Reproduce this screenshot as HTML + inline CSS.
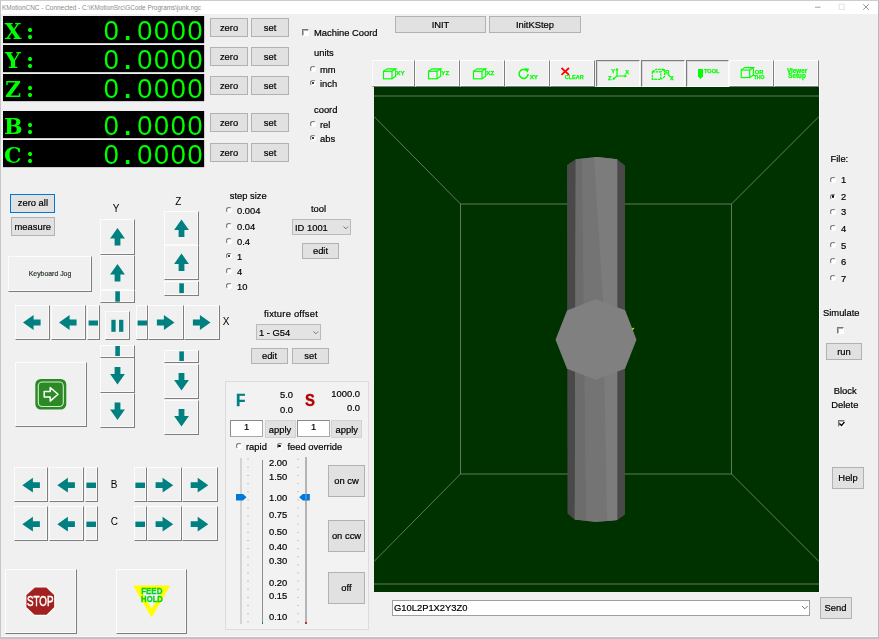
<!DOCTYPE html><html><head><meta charset="utf-8"><title>KMotionCNC</title><style>
*{box-sizing:border-box}
html,body{margin:0;padding:0}
body{width:879px;height:639px;overflow:hidden;background:#f0f0f0;position:relative;font-family:"Liberation Sans",sans-serif;font-size:9.4px;color:#000;-webkit-text-stroke:0.2px}
#w{position:absolute;left:0;top:0;width:879px;height:639px;filter:blur(0.4px)}
.a{position:absolute}
.t{position:absolute;white-space:nowrap;line-height:12px;height:12px;margin-top:1px}
.b{position:absolute;background:rgba(225,225,225,.99);border:1px solid #b2b2b2;text-align:center;white-space:nowrap}
.j{position:absolute;background:rgba(240,240,240,.99);border-top:1px solid #fcfcfc;border-left:1px solid #fcfcfc;border-right:1px solid #7e7e7e;border-bottom:1px solid #7e7e7e;box-shadow:inset -1px -1px 0 #fafafa}
.r{position:absolute;width:6px;height:6px;margin:1px 0 0 1px;border-radius:50%;background:#fff;border:1px solid #fff;border-top-color:#777;border-left-color:#777}
.r.on:after{content:"";position:absolute;left:.8px;top:.8px;width:2.4px;height:2.4px;background:#000;border-radius:50%}
.c{position:absolute;width:7px;height:7px;background:#fff;border-top:1px solid #777;border-left:1px solid #777;border-right:1px solid #fff;border-bottom:1px solid #fff;box-shadow:inset 1px 1px 0 #b0b0b0}
.cb{position:absolute;background:#e3e3e3;border:1px solid #bababa}
</style></head><body><div id="w">
<div class="a" style="left:0;top:0;width:879px;height:13.5px;background:#fff"></div>
<svg class="a" style="left:0;top:0" width="260" height="13"><text x="2" y="9.5" font-family="Liberation Sans,sans-serif" font-size="7.6" fill="#8a8a8a" textLength="199" lengthAdjust="spacingAndGlyphs">KMotionCNC - Connected - C:\KMotionSrc\GCode Programs\junk.ngc</text></svg>
<svg class="a" style="left:0;top:0" width="879" height="14"><g stroke-width="1" fill="none"><path d="M815 7.200h5.500" stroke="#a0a0a0"/><rect x="839.200" y="4.200" width="5" height="5.300" stroke="#e2e2e2"/><path d="M863.200 4.200l5.600 5.600M868.800 4.200l-5.600 5.600" stroke="#8c8c8c" stroke-width=".9"/></g></svg>
<svg class="a" style="left:3px;top:16px" width="202" height="28" viewBox="3 0 202 28"><rect x="3" y="0" width="202.300" height="28" fill="#fff"/><rect x="3" y="0" width="201.200" height="27.200" fill="#000"/><text x="4.5 26" y="22.8" font-family="DejaVu Serif,serif" font-weight="bold" font-size="22" fill="#00ff00">X:</text><text y="24" font-family="Liberation Sans,sans-serif" font-size="27" fill="#00ff00"><tspan x="103.700">0</tspan><tspan x="122.600" font-size="37">.</tspan><tspan x="137.200 154.000 170.800 187.600">0000</tspan></text></svg>
<div class="b" style="left:210px;top:18px;width:38px;height:19px;line-height:17px">zero</div>
<div class="b" style="left:251px;top:18px;width:38px;height:19px;line-height:17px">set</div>
<svg class="a" style="left:3px;top:45px" width="202" height="28" viewBox="3 0 202 28"><rect x="3" y="0" width="202.300" height="28" fill="#fff"/><rect x="3" y="0" width="201.200" height="27.200" fill="#000"/><text x="5 26" y="22.8" font-family="DejaVu Serif,serif" font-weight="bold" font-size="22" fill="#00ff00">Y:</text><text y="24" font-family="Liberation Sans,sans-serif" font-size="27" fill="#00ff00"><tspan x="103.700">0</tspan><tspan x="122.600" font-size="37">.</tspan><tspan x="137.200 154.000 170.800 187.600">0000</tspan></text></svg>
<div class="b" style="left:210px;top:47px;width:38px;height:19px;line-height:17px">zero</div>
<div class="b" style="left:251px;top:47px;width:38px;height:19px;line-height:17px">set</div>
<svg class="a" style="left:3px;top:74px" width="202" height="28" viewBox="3 0 202 28"><rect x="3" y="0" width="202.300" height="28" fill="#fff"/><rect x="3" y="0" width="201.200" height="27.200" fill="#000"/><text x="5 26" y="22.8" font-family="DejaVu Serif,serif" font-weight="bold" font-size="22" fill="#00ff00">Z:</text><text y="24" font-family="Liberation Sans,sans-serif" font-size="27" fill="#00ff00"><tspan x="103.700">0</tspan><tspan x="122.600" font-size="37">.</tspan><tspan x="137.200 154.000 170.800 187.600">0000</tspan></text></svg>
<div class="b" style="left:210px;top:76px;width:38px;height:19px;line-height:17px">zero</div>
<div class="b" style="left:251px;top:76px;width:38px;height:19px;line-height:17px">set</div>
<svg class="a" style="left:3px;top:111px" width="202" height="28" viewBox="3 0 202 28"><rect x="3" y="0" width="202.300" height="28" fill="#fff"/><rect x="3" y="0" width="201.200" height="27.200" fill="#000"/><text x="4 26" y="22.8" font-family="DejaVu Serif,serif" font-weight="bold" font-size="22" fill="#00ff00">B:</text><text y="24" font-family="Liberation Sans,sans-serif" font-size="27" fill="#00ff00"><tspan x="103.700">0</tspan><tspan x="122.600" font-size="37">.</tspan><tspan x="137.200 154.000 170.800 187.600">0000</tspan></text></svg>
<div class="b" style="left:210px;top:113px;width:38px;height:19px;line-height:17px">zero</div>
<div class="b" style="left:251px;top:113px;width:38px;height:19px;line-height:17px">set</div>
<svg class="a" style="left:3px;top:140px" width="202" height="28" viewBox="3 0 202 28"><rect x="3" y="0" width="202.300" height="28" fill="#fff"/><rect x="3" y="0" width="201.200" height="27.200" fill="#000"/><text x="4 26" y="22.8" font-family="DejaVu Serif,serif" font-weight="bold" font-size="22" fill="#00ff00">C:</text><text y="24" font-family="Liberation Sans,sans-serif" font-size="27" fill="#00ff00"><tspan x="103.700">0</tspan><tspan x="122.600" font-size="37">.</tspan><tspan x="137.200 154.000 170.800 187.600">0000</tspan></text></svg>
<div class="b" style="left:210px;top:143px;width:38px;height:19px;line-height:17px">zero</div>
<div class="b" style="left:251px;top:143px;width:38px;height:19px;line-height:17px">set</div>
<div class="c" style="left:302px;top:29.4px"></div>
<div class="t" style="left:314px;top:26px;">Machine Coord</div>
<div class="t" style="left:314px;top:46px;">units</div>
<div class="r" style="left:309px;top:65px"></div>
<div class="t" style="left:320px;top:63px;">mm</div>
<div class="r on" style="left:309px;top:79px"></div>
<div class="t" style="left:320px;top:77px;">inch</div>
<div class="t" style="left:314px;top:103px;">coord</div>
<div class="r" style="left:309px;top:120px"></div>
<div class="t" style="left:320px;top:118px;">rel</div>
<div class="r on" style="left:309px;top:134px"></div>
<div class="t" style="left:320px;top:132px;">abs</div>
<div class="b" style="left:395px;top:16px;width:91px;height:17px;line-height:15px;">INIT</div>
<div class="b" style="left:489px;top:16px;width:92px;height:17px;line-height:15px;">InitKStep</div>
<div class="j" style="left:372px;top:60px;width:43px;height:27px;"></div>
<div class="j" style="left:415px;top:60px;width:45px;height:27px;"></div>
<div class="j" style="left:460px;top:60px;width:45px;height:27px;"></div>
<div class="j" style="left:505px;top:60px;width:45px;height:27px;"></div>
<div class="j" style="left:550px;top:60px;width:45px;height:27px;"></div>
<div class="j" style="left:596px;top:60px;width:44px;height:27px;border-top:1px solid #7e7e7e;border-left:1px solid #7e7e7e;border-right:1px solid #fcfcfc;border-bottom:1px solid #fcfcfc;box-shadow:inset 1px 1px 0 #d8d8d8"></div>
<div class="j" style="left:641px;top:60px;width:44px;height:27px;border-top:1px solid #7e7e7e;border-left:1px solid #7e7e7e;border-right:1px solid #fcfcfc;border-bottom:1px solid #fcfcfc;box-shadow:inset 1px 1px 0 #d8d8d8"></div>
<div class="j" style="left:686px;top:60px;width:43px;height:27px;border-top:1px solid #7e7e7e;border-left:1px solid #7e7e7e;border-right:1px solid #fcfcfc;border-bottom:1px solid #fcfcfc;box-shadow:inset 1px 1px 0 #d8d8d8"></div>
<div class="j" style="left:729px;top:60px;width:45px;height:27px;"></div>
<div class="j" style="left:774px;top:60px;width:45px;height:27px;"></div>
<svg class="a" style="left:0;top:0" width="879" height="90"><g fill="none" stroke="#00ff00" stroke-width="1.15"><rect x="383.5" y="71.3" width="8.5" height="7.5"/><path d="M383.5 71.3l3.7 -2.500h8.500l-3.700 2.500M395.7 68.8v7.500l-3.700 2.500"/></g><text x="396.3" y="74.5" text-anchor="start" font-family="Liberation Sans,sans-serif" font-weight="bold" font-size="6.2" fill="#00ff00" stroke="#00ff00" stroke-width=".25">XY</text><g fill="none" stroke="#00ff00" stroke-width="1.15"><rect x="428.5" y="71.3" width="8.5" height="7.5"/><path d="M428.5 71.3l3.7 -2.500h8.500l-3.700 2.500M440.7 68.8v7.500l-3.700 2.500"/></g><text x="441.3" y="74.5" text-anchor="start" font-family="Liberation Sans,sans-serif" font-weight="bold" font-size="6.2" fill="#00ff00" stroke="#00ff00" stroke-width=".25">YZ</text><g fill="none" stroke="#00ff00" stroke-width="1.15"><rect x="473.5" y="71.3" width="8.5" height="7.5"/><path d="M473.5 71.3l3.7 -2.500h8.500l-3.700 2.500M485.7 68.8v7.500l-3.700 2.500"/></g><text x="486.3" y="74.5" text-anchor="start" font-family="Liberation Sans,sans-serif" font-weight="bold" font-size="6.2" fill="#00ff00" stroke="#00ff00" stroke-width=".25">XZ</text><path d="M526.3 70.300a4.500 4.500 0 1 0 1.800 3.600" fill="none" stroke="#00ff00" stroke-width="1.5"/><path d="M524.3 68.200l4.700 .300l-1.300 4.200z" fill="#00ff00"/><text x="529.7" y="78.7" text-anchor="start" font-family="Liberation Sans,sans-serif" font-weight="bold" font-size="6.2" fill="#00ff00" stroke="#00ff00" stroke-width=".25">XY</text><path d="M561.5 68l7.500 6.800M569 68l-7.500 6.800" stroke="#ff0000" stroke-width="1.7" fill="none"/><text x="564.7" y="79" text-anchor="start" font-family="Liberation Sans,sans-serif" font-weight="bold" font-size="5.5" fill="#00ff00" stroke="#00ff00" stroke-width=".25">CLEAR</text><g stroke="#00ff00" stroke-width="1.2" fill="none"><path d="M617 69.500v6.500h8.500M617 76l-3.500 3"/></g><path d="M617 67.800l-1.700 2.500h3.400zM627 76l-2.500-1.700v3.400zM612.500 80l.8-2.800 1.900 2z" fill="#00ff00"/><text x="611.2" y="73" text-anchor="start" font-family="Liberation Sans,sans-serif" font-weight="bold" font-size="5.8" fill="#00ff00" stroke="#00ff00" stroke-width=".25">Y</text><text x="625.3" y="73.7" text-anchor="start" font-family="Liberation Sans,sans-serif" font-weight="bold" font-size="5.8" fill="#00ff00" stroke="#00ff00" stroke-width=".25">X</text><text x="608" y="79.6" text-anchor="start" font-family="Liberation Sans,sans-serif" font-weight="bold" font-size="5.8" fill="#00ff00" stroke="#00ff00" stroke-width=".25">Z</text><g fill="none" stroke="#00ff00" stroke-width="1.15" stroke-dasharray="2.6 .7"><rect x="652.3" y="71.8" width="8.5" height="7.5"/><path d="M652.3 71.8l3.7 -2.500h8.500l-3.700 2.500M664.5 69.3v7.500l-3.700 2.500"/></g><text x="665.3" y="73.7" text-anchor="start" font-family="Liberation Sans,sans-serif" font-weight="bold" font-size="5.8" fill="#00ff00" stroke="#00ff00" stroke-width=".25">R</text><path d="M667.500 74l3 3" stroke="#00ff00" stroke-width="1.1" fill="none"/><text x="670" y="80.3" text-anchor="start" font-family="Liberation Sans,sans-serif" font-weight="bold" font-size="6.5" fill="#00ff00" stroke="#00ff00" stroke-width=".25">x</text><path d="M698 69h5v7.200l-2.500 2.800l-2.500-2.800z" fill="#00ff00"/><text x="704" y="73.4" text-anchor="start" font-family="Liberation Sans,sans-serif" font-weight="bold" font-size="5.6" fill="#00ff00" stroke="#00ff00" stroke-width=".25">TOOL</text><g fill="none" stroke="#00ff00" stroke-width="1.15"><rect x="741.2" y="70.1" width="8.5" height="7.5"/><path d="M741.2 70.1l3.7 -2.500h8.500l-3.700 2.500M753.4000000000001 67.6v7.500l-3.700 2.500"/></g><text x="754.7" y="73.6" text-anchor="start" font-family="Liberation Sans,sans-serif" font-weight="bold" font-size="5.8" fill="#00ff00" stroke="#00ff00" stroke-width=".25">OR</text><text x="753.7" y="79.2" text-anchor="start" font-family="Liberation Sans,sans-serif" font-weight="bold" font-size="5.2" fill="#00ff00" stroke="#00ff00" stroke-width=".25">THO</text><text x="797" y="73" text-anchor="middle" font-family="Liberation Sans,sans-serif" font-weight="bold" font-size="6.3" fill="#00ff00" stroke="#00ff00" stroke-width=".25">Viewer</text><text x="797" y="78.4" text-anchor="middle" font-family="Liberation Sans,sans-serif" font-weight="bold" font-size="6.3" fill="#00ff00" stroke="#00ff00" stroke-width=".25">Setup</text></svg>
<svg class="a" style="left:374px;top:86.5px" width="445" height="505.5" viewBox="374 86.5 445 505.5"><rect x="374" y="86.5" width="445" height="505.5" fill="#003200"/><g stroke="#5f7a5f" stroke-width="1" fill="none"><path d="M374 95.5H819M374 583.5H819"/><rect x="460.5" y="203.5" width="271" height="270"/><path d="M374 116L460.5 203.5M819 116L731.5 203.5M374 561L460.5 473.5M819 561L731.5 473.5"/></g><path d="M567 164.500L575.700 158.800L596.500 156.600L617 158.800L625 165V514L617.500 519.500L596 521.500L574.500 519L567.500 513z" fill="#494949"/><path d="M575.800 158.800L596.500 156.600L617.200 158.800V519.500L596 521.500L574.800 519z" fill="#747474"/><path d="M575.800 158.800L582 158.200L586 519.800L574.800 519z" fill="#6c6c6c"/><path d="M594 156.800L596.500 156.600L617.200 158.800V519.500L607 520.500L603 300z" fill="#7c7c7c"/><path d="M555.500 339.200L567 310L595.500 298.800L625.200 309.700L636.500 339.200L625 368.300L595.500 379.200L567 368.300z" fill="#808080"/><path d="M632 329l2-1.500" stroke="#e8e800" stroke-width="1.3"/></svg>
<div class="a" style="left:819px;top:86.5px;width:1px;height:505.5px;background:#fff"></div>
<div class="t" style="left:830.5px;top:152px;">File:</div>
<div class="r" style="left:829px;top:175.5px"></div>
<div class="t" style="left:841px;top:172.8px;">1</div>
<div class="r on" style="left:829px;top:192.5px"></div>
<div class="t" style="left:841px;top:189.8px;">2</div>
<div class="r" style="left:829px;top:207.5px"></div>
<div class="t" style="left:841px;top:204.8px;">3</div>
<div class="r" style="left:829px;top:224.3px"></div>
<div class="t" style="left:841px;top:221.60000000000002px;">4</div>
<div class="r" style="left:829px;top:241.2px"></div>
<div class="t" style="left:841px;top:238.5px;">5</div>
<div class="r" style="left:829px;top:257.4px"></div>
<div class="t" style="left:841px;top:254.7px;">6</div>
<div class="r" style="left:829px;top:274.2px"></div>
<div class="t" style="left:841px;top:271.5px;">7</div>
<div class="t" style="left:823px;top:306px;">Simulate</div>
<div class="c" style="left:837px;top:327px"></div>
<div class="b" style="left:826px;top:343px;width:36px;height:17px;line-height:15px;">run</div>
<div class="t" style="left:833.7px;top:383.5px;">Block</div>
<div class="t" style="left:831.3px;top:398px;">Delete</div>
<div class="c" style="left:838px;top:420px"></div>
<svg class="a" style="left:838px;top:420px" width="8" height="8"><path d="M1.5 3.5l2 2 3-3.5" stroke="#000" stroke-width="1.2" fill="none"/></svg>
<div class="b" style="left:832px;top:467px;width:32px;height:22px;line-height:20px;">Help</div>
<div class="a" style="left:392px;top:600px;width:418px;height:16px;background:#fff;border:1px solid #a0a0a0"></div>
<div class="t" style="left:394px;top:601px;">G10L2P1X2Y3Z0</div>
<svg class="a" style="left:801px;top:605px" width="8" height="6"><path d="M1 1l2.800 2.800l2.800-2.800" stroke="#707070" fill="none"/></svg>
<div class="b" style="left:819.5px;top:597px;width:32px;height:22px;line-height:20px;">Send</div>
<div class="j" style="left:100px;top:219px;width:35px;height:36px"><svg width="33" height="34" viewBox="0 0 33 34" style="display:block"><path transform="translate(16.5 17) rotate(0)" d="M0 -9L7.400 1.600H2.900V8.600H-2.900V1.600H-7.400Z" fill="#008080"/></svg></div>
<div class="j" style="left:100px;top:255px;width:35px;height:36px"><svg width="33" height="34" viewBox="0 0 33 34" style="display:block"><path transform="translate(16.5 17) rotate(0)" d="M0 -9L7.400 1.600H2.900V8.600H-2.900V1.600H-7.400Z" fill="#008080"/></svg></div>
<div class="j" style="left:100px;top:289.5px;width:35px;height:13.3px"><svg width="33" height="11.3" viewBox="0 0 33 11.3" style="display:block"><rect x="14.3" y="0.2999999999999998" width="4.6" height="10.4" fill="#008080"/></svg></div>
<div class="j" style="left:100px;top:357px;width:35px;height:35.5px"><svg width="33" height="33.5" viewBox="0 0 33 33.5" style="display:block"><path transform="translate(16.5 17.5) rotate(180)" d="M0 -9L7.400 1.600H2.900V8.600H-2.900V1.600H-7.400Z" fill="#008080"/></svg></div>
<div class="j" style="left:100px;top:392.5px;width:35px;height:35px"><svg width="33" height="33" viewBox="0 0 33 33" style="display:block"><path transform="translate(16.5 17) rotate(180)" d="M0 -9L7.400 1.600H2.900V8.600H-2.900V1.600H-7.400Z" fill="#008080"/></svg></div>
<div class="j" style="left:100px;top:344.8px;width:35px;height:12.9px"><svg width="33" height="10.9" viewBox="0 0 33 10.9" style="display:block"><rect x="14.3" y="0.0" width="4.6" height="10" fill="#008080"/></svg></div>
<div class="j" style="left:164px;top:211px;width:35px;height:35px"><svg width="33" height="33" viewBox="0 0 33 33" style="display:block"><path transform="translate(16.5 16.4) rotate(0)" d="M0 -9L7.400 1.600H2.900V8.600H-2.900V1.600H-7.400Z" fill="#008080"/></svg></div>
<div class="j" style="left:164px;top:245px;width:35px;height:34.6px"><svg width="33" height="32.6" viewBox="0 0 33 32.6" style="display:block"><path transform="translate(16.5 16.4) rotate(0)" d="M0 -9L7.400 1.600H2.900V8.600H-2.900V1.600H-7.400Z" fill="#008080"/></svg></div>
<div class="j" style="left:164px;top:281px;width:35px;height:14.5px"><svg width="33" height="12.5" viewBox="0 0 33 12.5" style="display:block"><rect x="14.3" y="1.2999999999999998" width="4.6" height="9.8" fill="#008080"/></svg></div>
<div class="j" style="left:164px;top:349.5px;width:35px;height:13.5px"><svg width="33" height="11.5" viewBox="0 0 33 11.5" style="display:block"><rect x="14.3" y="0.40000000000000036" width="4.6" height="9.6" fill="#008080"/></svg></div>
<div class="j" style="left:164px;top:364px;width:35px;height:35px"><svg width="33" height="33" viewBox="0 0 33 33" style="display:block"><path transform="translate(16.5 16.5) rotate(180)" d="M0 -9L7.400 1.600H2.900V8.600H-2.900V1.600H-7.400Z" fill="#008080"/></svg></div>
<div class="j" style="left:164px;top:400px;width:35px;height:35px"><svg width="33" height="33" viewBox="0 0 33 33" style="display:block"><path transform="translate(16.5 16.6) rotate(180)" d="M0 -9L7.400 1.600H2.900V8.600H-2.900V1.600H-7.400Z" fill="#008080"/></svg></div>
<div class="j" style="left:15px;top:305px;width:35px;height:35px"><svg width="33" height="33" viewBox="0 0 33 33" style="display:block"><path transform="translate(16 16.5) rotate(270)" d="M0 -9L7.400 1.600H2.900V8.600H-2.900V1.600H-7.400Z" fill="#008080"/></svg></div>
<div class="j" style="left:51px;top:305px;width:35px;height:35px"><svg width="33" height="33" viewBox="0 0 33 33" style="display:block"><path transform="translate(16 16.5) rotate(270)" d="M0 -9L7.400 1.600H2.900V8.600H-2.900V1.600H-7.400Z" fill="#008080"/></svg></div>
<div class="j" style="left:87px;top:305px;width:13px;height:35px"><svg width="11" height="33" viewBox="0 0 11 33" style="display:block"><rect x="0.5999999999999996" y="14.5" width="9.4" height="5" fill="#008080"/></svg></div>
<div class="j" style="left:105px;top:310.5px;width:25px;height:29px"><svg width="23" height="27" viewBox="0 0 23 27" style="display:block"><rect x="5.35" y="7.800000000000001" width="4.3" height="12" fill="#008080"/><rect x="13.049999999999999" y="7.800000000000001" width="4.3" height="12" fill="#008080"/></svg></div>
<div class="j" style="left:135.5px;top:305px;width:12.5px;height:35px"><svg width="10.5" height="33" viewBox="0 0 10.5 33" style="display:block"><rect x="0.5999999999999996" y="14.5" width="9.4" height="5" fill="#008080"/></svg></div>
<div class="j" style="left:148px;top:305px;width:36px;height:35px"><svg width="34" height="33" viewBox="0 0 34 33" style="display:block"><path transform="translate(16.5 16.5) rotate(90)" d="M0 -9L7.400 1.600H2.900V8.600H-2.900V1.600H-7.400Z" fill="#008080"/></svg></div>
<div class="j" style="left:184px;top:305px;width:36px;height:35px"><svg width="34" height="33" viewBox="0 0 34 33" style="display:block"><path transform="translate(16.5 16.5) rotate(90)" d="M0 -9L7.400 1.600H2.900V8.600H-2.900V1.600H-7.400Z" fill="#008080"/></svg></div>
<div class="j" style="left:13.5px;top:467.3px;width:34.7px;height:35px"><svg width="32.7" height="33" viewBox="0 0 32.7 33" style="display:block"><path transform="translate(16.3 17.2) rotate(270)" d="M0 -9L7.400 1.600H2.900V8.600H-2.900V1.600H-7.400Z" fill="#008080"/></svg></div>
<div class="j" style="left:49.3px;top:467.3px;width:34.5px;height:35px"><svg width="32.5" height="33" viewBox="0 0 32.5 33" style="display:block"><path transform="translate(16.3 17.2) rotate(270)" d="M0 -9L7.400 1.600H2.900V8.600H-2.900V1.600H-7.400Z" fill="#008080"/></svg></div>
<div class="j" style="left:84.8px;top:467.3px;width:13px;height:35px"><svg width="11" height="33" viewBox="0 0 11 33" style="display:block"><rect x="0.40000000000000036" y="14.600000000000001" width="9.6" height="5.4" fill="#008080"/></svg></div>
<div class="j" style="left:134px;top:467.3px;width:12.7px;height:35px"><svg width="10.7" height="33" viewBox="0 0 10.7 33" style="display:block"><rect x="0.40000000000000036" y="14.600000000000001" width="9.6" height="5.4" fill="#008080"/></svg></div>
<div class="j" style="left:146.7px;top:467.3px;width:35.2px;height:35px"><svg width="33.2" height="33" viewBox="0 0 33.2 33" style="display:block"><path transform="translate(16.2 17.2) rotate(90)" d="M0 -9L7.400 1.600H2.900V8.600H-2.900V1.600H-7.400Z" fill="#008080"/></svg></div>
<div class="j" style="left:182.3px;top:467.3px;width:35.7px;height:35px"><svg width="33.7" height="33" viewBox="0 0 33.7 33" style="display:block"><path transform="translate(16.3 17.2) rotate(90)" d="M0 -9L7.400 1.600H2.900V8.600H-2.900V1.600H-7.400Z" fill="#008080"/></svg></div>
<div class="j" style="left:13.5px;top:505.8px;width:34.7px;height:35px"><svg width="32.7" height="33" viewBox="0 0 32.7 33" style="display:block"><path transform="translate(16.3 17.2) rotate(270)" d="M0 -9L7.400 1.600H2.900V8.600H-2.900V1.600H-7.400Z" fill="#008080"/></svg></div>
<div class="j" style="left:49.3px;top:505.8px;width:34.5px;height:35px"><svg width="32.5" height="33" viewBox="0 0 32.5 33" style="display:block"><path transform="translate(16.3 17.2) rotate(270)" d="M0 -9L7.400 1.600H2.900V8.600H-2.900V1.600H-7.400Z" fill="#008080"/></svg></div>
<div class="j" style="left:84.8px;top:505.8px;width:13px;height:35px"><svg width="11" height="33" viewBox="0 0 11 33" style="display:block"><rect x="0.40000000000000036" y="14.600000000000001" width="9.6" height="5.4" fill="#008080"/></svg></div>
<div class="j" style="left:134px;top:505.8px;width:12.7px;height:35px"><svg width="10.7" height="33" viewBox="0 0 10.7 33" style="display:block"><rect x="0.40000000000000036" y="14.600000000000001" width="9.6" height="5.4" fill="#008080"/></svg></div>
<div class="j" style="left:146.7px;top:505.8px;width:35.2px;height:35px"><svg width="33.2" height="33" viewBox="0 0 33.2 33" style="display:block"><path transform="translate(16.2 17.2) rotate(90)" d="M0 -9L7.400 1.600H2.900V8.600H-2.900V1.600H-7.400Z" fill="#008080"/></svg></div>
<div class="j" style="left:182.3px;top:505.8px;width:35.7px;height:35px"><svg width="33.7" height="33" viewBox="0 0 33.7 33" style="display:block"><path transform="translate(16.3 17.2) rotate(90)" d="M0 -9L7.400 1.600H2.900V8.600H-2.900V1.600H-7.400Z" fill="#008080"/></svg></div>
<div class="t" style="left:110.8px;top:477.6px;-webkit-text-stroke:0;font-size:10px">B</div>
<div class="t" style="left:110.8px;top:514.6px;-webkit-text-stroke:0;font-size:10px">C</div>
<div class="t" style="left:112.8px;top:201.8px;-webkit-text-stroke:0;font-size:10px">Y</div>
<div class="t" style="left:175.2px;top:194.5px;-webkit-text-stroke:0;font-size:10px">Z</div>
<div class="t" style="left:222.7px;top:314.5px;-webkit-text-stroke:0;font-size:10px">X</div>
<div class="b" style="left:10.300px;top:193.800px;width:45.200px;height:19.600px;line-height:16.600px;border:1.5px solid #0078d7">zero all</div>
<div class="b" style="left:10.5px;top:216.5px;width:44.5px;height:19px;line-height:17px;">measure</div>
<div class="j" style="left:8px;top:256px;width:84px;height:36px;text-align:center;line-height:34px;font-size:6.9px;color:#2e382e">Keyboard Jog</div>
<div class="j" style="left:15px;top:362px;width:72px;height:65px"><svg width="70" height="63" viewBox="0 0 70 63" style="display:block"><rect x="19.300" y="16" width="31" height="30.500" rx="5.500" fill="#2b8a24"/><rect x="22.300" y="19" width="25" height="24.500" rx="4" fill="none" stroke="#d4ecd0" stroke-width="1.1"/><path d="M28.200 28.500h6v-4l7.800 6.800l-7.800 6.800v-4h-6z" fill="none" stroke="#fff" stroke-width="1.5" stroke-linejoin="round"/></svg></div>
<div class="j" style="left:5px;top:569px;width:72px;height:65px"><svg width="70" height="63" viewBox="0 0 70 63" style="display:block"></svg></div>
<div class="j" style="left:116px;top:569px;width:71px;height:65px"><svg width="69" height="63" viewBox="0 0 69 63" style="display:block"></svg></div>
<svg class="a" style="left:0;top:570px" width="200" height="66" viewBox="0 570 200 66"><path d="M34.400 587h12.300l8.100 7.900v12.600l-8.100 7.900h-12.300l-8.600-7.900v-12.600z" fill="#a32020" stroke="#fff" stroke-width="1.2"/><text x="26.900" y="606.400" font-family="Liberation Sans,sans-serif" font-size="14.5" fill="#fff" stroke="#fff" stroke-width=".5" textLength="26.600" lengthAdjust="spacingAndGlyphs">STOP</text><path d="M134.500 586.400h34.200l-17.100 29.600z" fill="#ffff00" stroke="#ffff00" stroke-width="1.6" stroke-linejoin="round"/><path d="M140.800 590h22l-11.200 18.600z" fill="#f4f2f8"/><g font-family="Liberation Sans,sans-serif" font-size="8.6" font-weight="bold" fill="#00d21e" stroke="#00d21e" stroke-width=".3" text-anchor="middle"><text x="151.800" y="593.600" textLength="21.200" lengthAdjust="spacingAndGlyphs">FEED</text><text x="152" y="601.700" textLength="21.800" lengthAdjust="spacingAndGlyphs">HOLD</text></g></svg>
<div class="t" style="left:229.7px;top:189px;">step size</div>
<div class="r" style="left:225px;top:206px"></div>
<div class="t" style="left:237px;top:204px;">0.004</div>
<div class="r" style="left:225px;top:222px"></div>
<div class="t" style="left:237px;top:220px;">0.04</div>
<div class="r" style="left:225px;top:237px"></div>
<div class="t" style="left:237px;top:235px;">0.4</div>
<div class="r on" style="left:225px;top:252px"></div>
<div class="t" style="left:237px;top:250px;">1</div>
<div class="r" style="left:225px;top:267px"></div>
<div class="t" style="left:237px;top:265px;">4</div>
<div class="r" style="left:225px;top:282px"></div>
<div class="t" style="left:237px;top:280px;">10</div>
<div class="t" style="left:311px;top:202px;">tool</div>
<div class="cb" style="left:292px;top:219px;width:59px;height:16px"></div>
<div class="t" style="left:295px;top:220.5px;">ID 1001</div>
<svg class="a" style="left:343px;top:225.8px" width="8" height="6"><path d="M.5 .5l2.300 2.300l2.300-2.300" stroke="#686868" stroke-width=".9" fill="none"/></svg>
<div class="b" style="left:302px;top:243px;width:37px;height:16px;line-height:14px;">edit</div>
<div class="t" style="left:264px;top:307px;letter-spacing:.22px">fixture offset</div>
<div class="cb" style="left:256px;top:324px;width:65px;height:16px"></div>
<div class="t" style="left:259px;top:325.5px;">1 - G54</div>
<svg class="a" style="left:313px;top:330.8px" width="8" height="6"><path d="M.5 .5l2.300 2.300l2.300-2.300" stroke="#686868" stroke-width=".9" fill="none"/></svg>
<div class="b" style="left:251px;top:347.5px;width:37px;height:16.5px;line-height:14.5px;">edit</div>
<div class="b" style="left:292px;top:347.5px;width:37px;height:16.5px;line-height:14.5px;">set</div>
<div class="a" style="left:225px;top:381px;width:144px;height:249px;border:1px solid #dcdcdc;background:#f2f2f2"></div>
<div class="t" style="left:235.500px;top:390px;font-size:16.5px;font-weight:bold;-webkit-text-stroke:.45px;color:#008080;line-height:18px;height:18px;transform:scaleX(.93);transform-origin:0 0">F</div>
<div class="t" style="left:305px;top:389.500px;font-size:16.5px;font-weight:bold;-webkit-text-stroke:.35px;color:#b00000;line-height:18px;height:18px;transform:scaleX(.9);transform-origin:0 0">S</div>
<div class="t" style="left:262px;top:388px;width:31px;text-align:right">5.0</div>
<div class="t" style="left:262px;top:403px;width:31px;text-align:right">0.0</div>
<div class="t" style="left:320px;top:387px;width:40px;text-align:right">1000.0</div>
<div class="t" style="left:320px;top:401px;width:40px;text-align:right">0.0</div>
<div class="a" style="left:230px;top:420px;width:33px;height:17px;background:rgba(255,255,255,.99);border:1px solid #a8a8a8;border-top-color:#8a8a8a;border-left-color:#8a8a8a;text-align:center;line-height:12px">1</div>
<div class="b" style="left:264.5px;top:420px;width:31px;height:17.5px;line-height:15.5px;border-color:#d2d2d2;line-height:17px">apply</div>
<div class="a" style="left:297px;top:420px;width:33px;height:17px;background:rgba(255,255,255,.99);border:1px solid #a8a8a8;border-top-color:#8a8a8a;border-left-color:#8a8a8a;text-align:center;line-height:12px">1</div>
<div class="b" style="left:331.3px;top:420px;width:31px;height:17.5px;line-height:15.5px;border-color:#d2d2d2;line-height:17px">apply</div>
<div class="r" style="left:235px;top:442px"></div>
<div class="t" style="left:246px;top:440px;">rapid</div>
<div class="r on" style="left:275.5px;top:442px"></div>
<div class="t" style="left:287.5px;top:440px;">feed override</div>
<div class="a" style="left:240px;top:457.500px;width:2px;height:166.500px;background:#d4d4d4"></div>
<div class="a" style="left:261.700px;top:459.500px;width:1.3px;height:164px;background:#909090"></div>
<div class="a" style="left:261.700px;top:622px;width:1.3px;height:2px;background:#008080"></div>
<div class="a" style="left:305px;top:457px;width:2px;height:167px;background:#b4b4b4"></div>
<div class="a" style="left:305px;top:622px;width:2px;height:2px;background:#c03030"></div>
<svg class="a" style="left:0;top:0" width="879" height="639"><g stroke="#c6c6c6" stroke-width="1"><path d="M247 459.2h2M297.2 459.2h2"/><path d="M247 467.3h2M297.2 467.3h2"/><path d="M247 475.5h2M297.2 475.5h2"/><path d="M247 483.6h2M297.2 483.6h2"/><path d="M247 491.7h2M297.2 491.7h2"/><path d="M247 499.9h2M297.2 499.9h2"/><path d="M247 508.0h2M297.2 508.0h2"/><path d="M247 516.1h2M297.2 516.1h2"/><path d="M247 524.2h2M297.2 524.2h2"/><path d="M247 532.4h2M297.2 532.4h2"/><path d="M247 540.5h2M297.2 540.5h2"/><path d="M247 548.6h2M297.2 548.6h2"/><path d="M247 556.8h2M297.2 556.8h2"/><path d="M247 564.9h2M297.2 564.9h2"/><path d="M247 573.0h2M297.2 573.0h2"/><path d="M247 581.1h2M297.2 581.1h2"/><path d="M247 589.3h2M297.2 589.3h2"/><path d="M247 597.4h2M297.2 597.4h2"/><path d="M247 605.5h2M297.2 605.5h2"/><path d="M247 613.7h2M297.2 613.7h2"/><path d="M247 621.8h2M297.2 621.8h2"/></g><path d="M236 494h7l3.600 3.200l-3.600 3.200h-7z" fill="#0078d7"/><path d="M309.800 494h-7l-3.600 3.200l3.600 3.200h7z" fill="#0078d7"/><rect x="305" y="494" width="1.8" height="6.400" fill="#5aa0e0" opacity=".7"/></svg>
<div class="t" style="left:269px;top:456.3px;">2.00</div>
<div class="t" style="left:269px;top:469.8px;">1.50</div>
<div class="t" style="left:269px;top:490.8px;">1.00</div>
<div class="t" style="left:269px;top:507.8px;">0.75</div>
<div class="t" style="left:269px;top:524.8px;">0.50</div>
<div class="t" style="left:269px;top:539.8px;">0.40</div>
<div class="t" style="left:269px;top:554.3px;">0.30</div>
<div class="t" style="left:269px;top:575.8px;">0.20</div>
<div class="t" style="left:269px;top:589.3px;">0.15</div>
<div class="t" style="left:269px;top:609.8px;">0.10</div>
<div class="b" style="left:328px;top:465px;width:37px;height:32px;line-height:30px;">on cw</div>
<div class="b" style="left:328px;top:520px;width:37px;height:32px;line-height:30px;">on ccw</div>
<div class="b" style="left:328px;top:572px;width:37px;height:32px;line-height:30px;">off</div>
<div class="a" style="left:0;top:636.3px;width:879px;height:1px;background:#f8f8f8"></div><div class="a" style="left:0;top:637.3px;width:879px;height:2px;background:#c2c2c2"></div>
<div class="a" style="left:878px;top:0;width:1px;height:639px;background:#b8b8bc"></div>
<div class="a" style="left:0;top:0;width:1px;height:639px;background:#c6c6c6"></div>
<div class="a" style="left:0;top:0;width:879px;height:1px;background:#cdcdcd"></div>
</div></body></html>
